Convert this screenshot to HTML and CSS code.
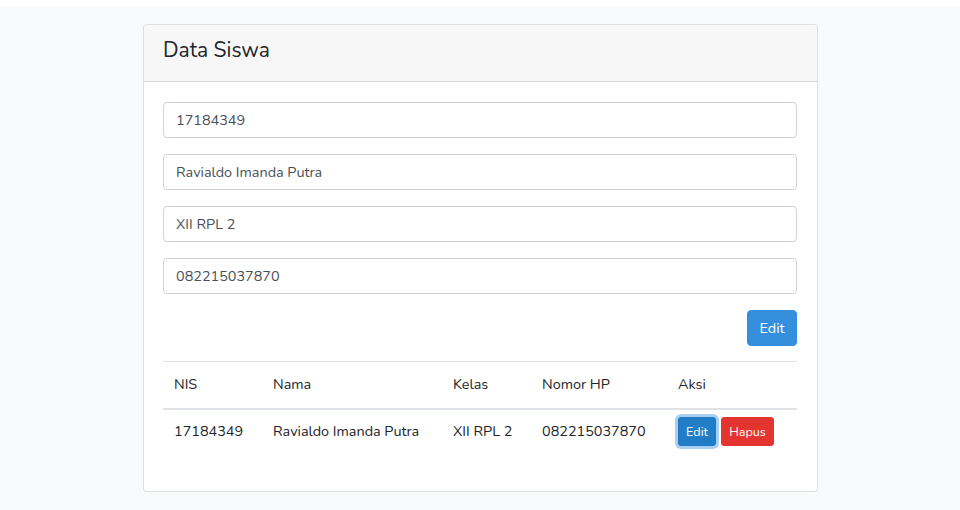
FILE: index.html
```html
<!DOCTYPE html>
<html lang="id">
<head>
<meta charset="utf-8">
<title>Data Siswa</title>
<link rel="stylesheet" href="styles.css">
</head>
<body>
<div class="topstrip"></div>
<main class="main">
  <div class="card">
    <div class="card-header"><h3 class="title">Data Siswa</h3></div>
    <div class="card-body">
      <form class="form">
        <div class="form-group"><input class="form-control" type="text" value="17184349"></div>
        <div class="form-group"><input class="form-control" type="text" value="Ravialdo Imanda Putra"></div>
        <div class="form-group"><input class="form-control" type="text" value="XII RPL 2"></div>
        <div class="form-group"><input class="form-control" type="text" value="082215037870"></div>
        <div class="form-actions"><button type="button" class="btn btn-primary">Edit</button></div>
      </form>
      <table class="table">
        <colgroup>
          <col class="c1"><col class="c2"><col class="c3"><col class="c4"><col class="c5">
        </colgroup>
        <thead>
          <tr><th>NIS</th><th>Nama</th><th>Kelas</th><th>Nomor HP</th><th>Aksi</th></tr>
        </thead>
        <tbody>
          <tr>
            <td>17184349</td>
            <td>Ravialdo Imanda Putra</td>
            <td>XII RPL 2</td>
            <td>082215037870</td>
            <td><span class="actions"><button type="button" class="btn btn-sm btn-primary-active">Edit</button><button type="button" class="btn btn-sm btn-danger">Hapus</button></span></td>
          </tr>
        </tbody>
      </table>
    </div>
  </div>
</main>
</body>
</html>
```

FILE: styles.css
```css
* { box-sizing: border-box; }
html, body { margin: 0; padding: 0; }
body {
  font-family: "Nunito", "Lato", "Noto Sans", sans-serif;
  font-size: 14.4px;
  line-height: 1.6;
  color: #212529;
  background: #f8fafc;
  height: 510px;
  overflow: hidden;
}
.topstrip { height: 6px; background: #fff; }
.main { padding-top: 18px; }
.card {
  width: 675px;
  margin: 0 auto 0 143px;
  background: #fff;
  border: 1px solid rgba(0,0,0,.125);
  border-radius: 4px;
  height: 468px;
}
.card-header {
  background: #f7f7f7;
  border-bottom: 1px solid rgba(0,0,0,.125);
  padding: 9px 19px 15px;
  border-radius: 3px 3px 0 0;
}
.title {
  margin: 0;
  font-weight: 400;
  font-size: 21px;
  line-height: 32px;
  color: #212529;
}
.card-body { padding: 20px 20px 20px 19px; }
.form-group { margin-bottom: 16px; }
.form-control {
  display: block;
  width: 100%;
  height: 36px;
  padding: 6px 12px;
  font: inherit;
  font-size: 14.4px;
  color: #495057;
  background: #fff;
  border: 1px solid #ced4da;
  border-radius: 4px;
  outline: none;
}
.form-actions { display: flex; justify-content: flex-end; margin-bottom: 15px; }
.btn {
  font: inherit;
  font-size: 14.4px;
  line-height: 23px;
  border: 1px solid transparent;
  border-radius: 4px;
  padding: 6px 11px;
  color: #fff;
  cursor: pointer;
}
.btn-primary { background: #3490dc; border-color: #3490dc; height: 36px; width: 50px; padding: 0; }
.btn-sm { font-size: 12.6px; line-height: 19px; padding: 4px 8px; border-radius: 3px; height: 29px; }
.btn-primary-active {
  background: #227dc7;
  border-color: #2176bd;
  box-shadow: 0 0 0 3px rgba(82,161,225,.5);
  width: 38px;
  padding: 0;
}
.btn-danger { background: #e3342f; border-color: #e3342f; width: 53px; padding: 0; }
.actions { display: flex; gap: 5px; }
.table { width: 100%; border-collapse: collapse; table-layout: fixed; }
.c1 { width: 99px; } .c2 { width: 180px; } .c3 { width: 89px; } .c4 { width: 136px; } .c5 { width: 130px; }
.table th, .table td {
  text-align: left;
  font-weight: 400;
  padding: 11px 11px 12px;
  border-top: 1px solid #dee2e6;
  vertical-align: middle;
  white-space: nowrap;
}
.table thead th { border-bottom: 2px solid #dee2e6; }
.table tbody td { border-top: none; padding: 7px 11px; }
```
